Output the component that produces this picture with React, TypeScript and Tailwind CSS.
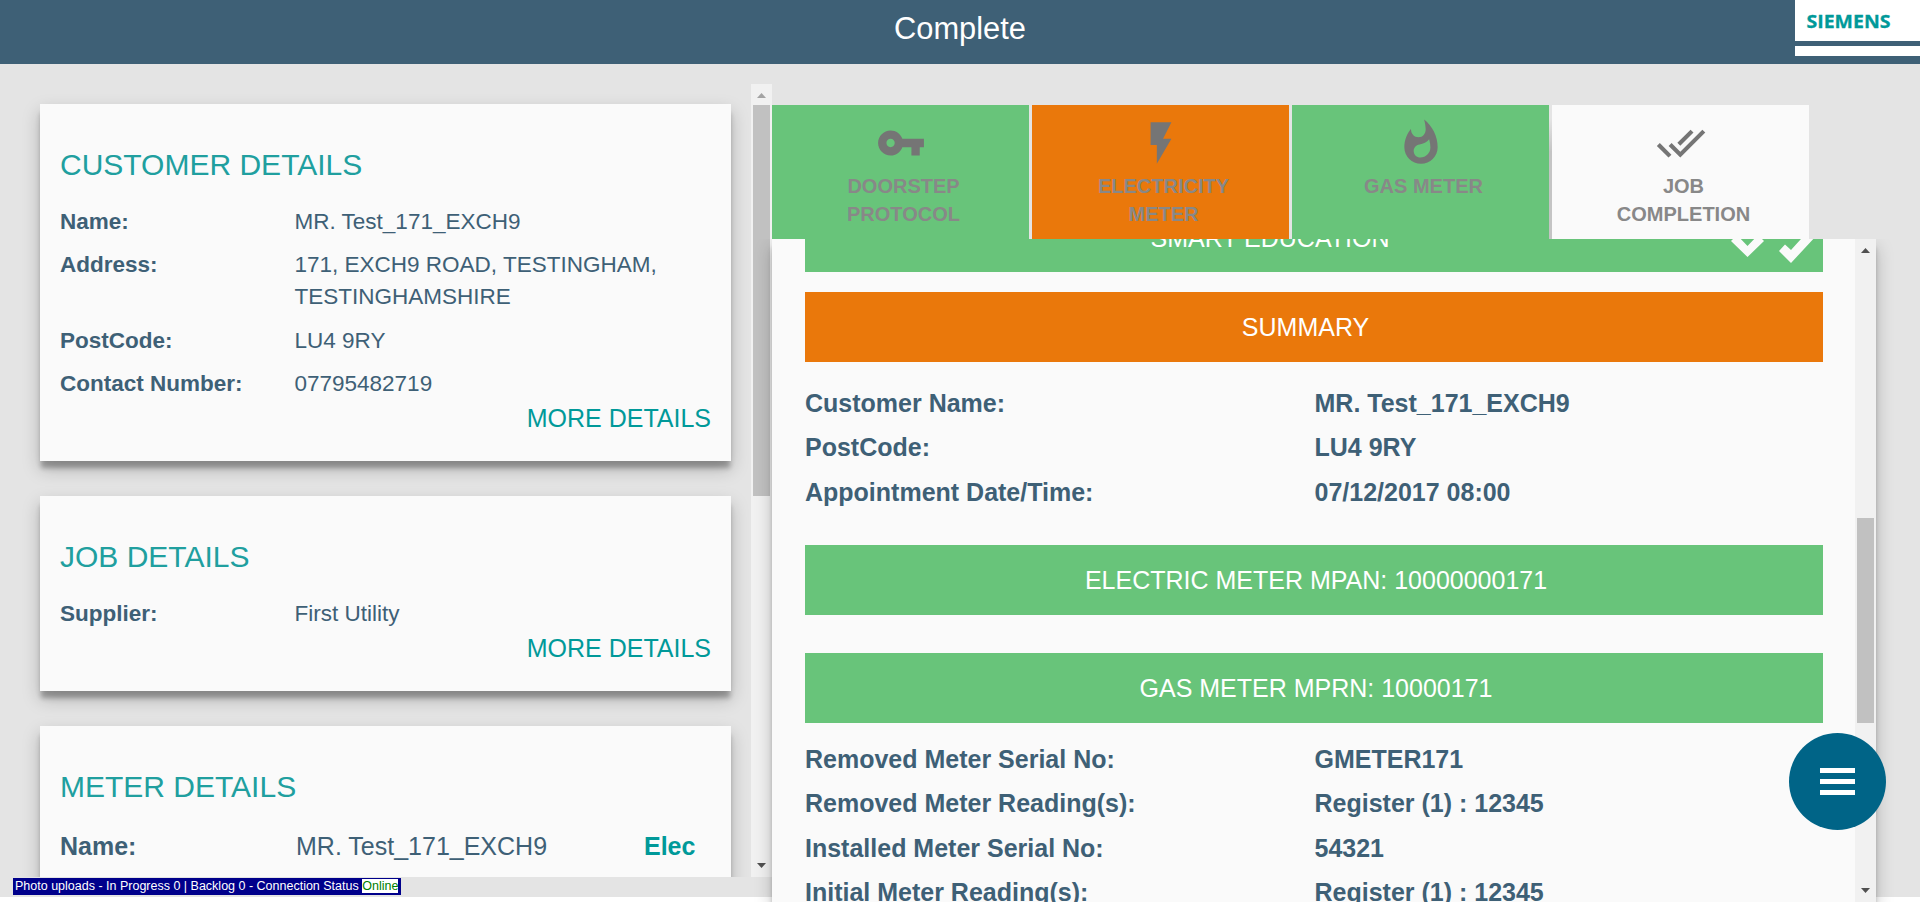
import { ReactNode } from "react";
import clsx from "clsx";

const shadow = "shadow-[0_8px_5px_-1px_rgba(0,0,0,0.28),0_8px_17px_rgba(0,0,0,0.22)]";

function Arrow({ down, className }: { down?: boolean; className: string }) {
  return (
    <svg viewBox="0 0 9 5" className={clsx("h-[5px] w-[9px]", down && "rotate-180", className)} fill="currentColor">
      <path d="M0 5h9L4.5 0z" />
    </svg>
  );
}

function Scrollbar({ thumb, top, up = "text-[#505050]" }: { thumb: string; top: string; up?: string }) {
  return (
    <div className="flex h-full w-[21px] shrink-0 flex-col items-center bg-[#f1f1f1]">
      <Arrow className={clsx("mt-[9px] shrink-0", up)} />
      <div className={clsx("w-[17px] bg-[#c1c1c1]", thumb, top)} />
      <Arrow down className="mt-auto mb-[9px] shrink-0 text-[#505050]" />
    </div>
  );
}

function Card({ title, className, children }: { title: string; className: string; children: ReactNode }) {
  return (
    <section className={clsx("flex shrink-0 flex-col bg-[#fafafa] px-5 pt-[39px]", shadow, className)}>
      <h2 className="h-[44px] text-[30px] leading-[43px] text-[#209f9f]">{title}</h2>
      {children}
    </section>
  );
}

function Row({ label, value }: { label: string; value: string }) {
  return (
    <div className="mb-[11.4px] flex">
      <div className="w-[234.5px] shrink-0 font-bold">{label}</div>
      <div>{value}</div>
    </div>
  );
}

function Tab({ label, className, path }: { label: string; className: string; path: string }) {
  return (
    <div className={clsx("flex h-[134px] w-[257px] flex-col items-center pt-[13px]", className)}>
      <svg viewBox="0 0 24 24" className="size-[50px] shrink-0" fill="#757575">
        <path d={path} />
      </svg>
      <div className="mt-[4px] w-[150px] translate-x-[3px] text-center text-[20px] leading-[28px] font-bold text-[#888]">{label}</div>
    </div>
  );
}

function Bar({ className, children }: { className: string; children: ReactNode }) {
  return (
    <div className={clsx("flex h-[70px] shrink-0 items-center justify-center text-[25px] leading-[36px] text-white", className)}>
      {children}
    </div>
  );
}

function Summary({ rows, className }: { rows: string[][]; className: string }) {
  return (
    <div className={clsx("shrink-0 text-[25px] leading-[44.6px] font-bold", className)}>
      {rows.map(([label, value]) => (
        <div key={label} className="grid grid-cols-2">
          <div>{label}</div>
          <div className="pl-[0.5px]">{value}</div>
        </div>
      ))}
    </div>
  );
}

export default function App() {
  return (
    <div className="relative flex h-[902px] w-[1920px] flex-col overflow-hidden bg-white font-['Liberation_Sans',Arial,sans-serif] text-[#3e6076]">
      <header className="relative flex h-16 shrink-0 justify-center bg-[#3e6076]">
        <h1 className="mt-[7px] text-[30.8px] leading-[43px] text-white">Complete</h1>
        <div className="absolute top-0 right-0 flex h-14 w-[125px] flex-col bg-white">
          <svg viewBox="0 0 125 41" className="h-[41px] w-[125px]">
            <text x="11.5" y="28.3" textLength="84" lengthAdjust="spacingAndGlyphs" fontFamily="Open Sans, sans-serif" fontWeight="700" fontSize="18" fill="#009999" stroke="#009999" strokeWidth="0.3">SIEMENS</text>
          </svg>
          <div className="h-[5px] bg-[#3e6076]" />
        </div>
      </header>

      <div className="flex h-[833px] shrink-0 bg-[#e4e4e4]">
        <aside className="flex w-[772px] shrink-0 flex-col pt-5">
          <div className="flex h-[793px] shrink-0">
            <div className="flex w-[751px] flex-col gap-[35px] overflow-hidden py-5 pr-5 pl-10">
              <Card title="CUSTOMER DETAILS" className="h-[357px]">
                <div className="mt-[19px] text-[22.5px] leading-[32px]">
                  <Row label="Name:" value="MR. Test_171_EXCH9" />
                  <Row label="Address:" value="171, EXCH9 ROAD, TESTINGHAM, TESTINGHAMSHIRE" />
                  <Row label="PostCode:" value="LU4 9RY" />
                  <Row label="Contact Number:" value="07795482719" />
                </div>
                <a className="-mt-[12px] self-end text-[25px] leading-[36px] text-[#009999]">MORE DETAILS</a>
              </Card>
              <Card title="JOB DETAILS" className="h-[195px]">
                <div className="mt-[19px] text-[22.5px] leading-[32px]">
                  <Row label="Supplier:" value="First Utility" />
                </div>
                <a className="-mt-[11px] self-end text-[25px] leading-[36px] text-[#009999]">MORE DETAILS</a>
              </Card>
              <Card title="METER DETAILS" className="h-[300px]">
                <div className="mt-[19px] flex text-[25px] leading-[36px]">
                  <div className="w-[236px] font-bold">Name:</div>
                  <div className="w-[348px]">MR. Test_171_EXCH9</div>
                  <div className="font-bold text-[#009999]">Elec</div>
                </div>
              </Card>
            </div>
            <Scrollbar thumb="h-[391px]" top="mt-[7px]" up="text-[#a3a3a3]" />
          </div>
          <div className="mt-px ml-[13px] flex h-[17px] w-[388px] items-center bg-[#00008b] px-[2px] pb-px text-[12.5px] leading-[14px] whitespace-pre text-white">
            Photo uploads - In Progress 0 | Backlog 0 - Connection Status <span className="bg-white text-[#008000]">Online</span>
          </div>
        </aside>

        <main className="flex h-[838px] flex-col pt-[41px]">
          <nav className="relative flex gap-[3px]">
            <Tab label="DOORSTEP PROTOCOL" className="bg-[#68c47a]" path="M12.65 10C11.83 7.67 9.61 6 7 6c-3.31 0-6 2.69-6 6s2.69 6 6 6c2.61 0 4.83-1.67 5.65-4H17v4h4v-4h2v-4H12.65zM7 14c-1.1 0-2-.9-2-2s.9-2 2-2 2 .9 2 2-.9 2-2 2z" />
            <Tab label="ELECTRICITY METER" className="bg-[#ea780b]" path="M7 2v11h3v9l7-12h-4l4-8z" />
            <Tab label="GAS METER" className="bg-[#68c47a]" path="M13.5.67s.74 2.65.74 4.8c0 2.06-1.35 3.73-3.41 3.73-2.07 0-3.63-1.67-3.63-3.73l.03-.36C5.21 7.51 4 10.62 4 14c0 4.42 3.58 8 8 8s8-3.58 8-8C20 8.61 17.41 3.8 13.5.67zM11.71 19c-1.78 0-3.22-1.4-3.22-3.14 0-1.62 1.05-2.76 2.81-3.12 1.77-.36 3.6-1.21 4.62-2.58.39 1.29.59 2.65.59 4.04 0 2.65-2.15 4.8-4.8 4.8z" />
            <div className="-ml-[3px] h-[134px] bg-linear-to-b from-[#e4e4e4] from-10% to-[#c4c4c4] to-35% pl-[3px]">
              <Tab label="JOB COMPLETION" className="bg-[#fafafa]" path="M18 7l-1.41-1.41-6.34 6.34 1.41 1.41L18 7zm4.24-1.41L11.66 16.17 7.48 12l-1.41 1.41L11.66 19l12-12-1.42-1.41zM.41 13.41L6 19l1.41-1.41L1.83 12 .41 13.41z" />
            </div>
          </nav>
          <div className={clsx("relative h-[663px] w-[1104px] shrink-0", "[clip-path:inset(0_-40px_0_-40px)]")}>
            <div className={clsx("flex h-full bg-[#fafafa]", shadow)}>
              <div className="flex h-full w-[1083px] flex-col overflow-hidden pr-[32px] pl-[33px]">
                <Bar className="relative -mt-[37px] bg-[#68c47a] pt-px pr-[88px]">
                  SMART EDUCATION
                  <svg viewBox="0 0 84 32" className="absolute top-[24px] right-[8px] h-[32px] w-[84px]" fill="#fafafa">
                    <path d="M0 15l6-6 10.5 11L27 9l6 6-16.500 16z" />
                  </svg>
                  <svg viewBox="0 0 40 36" className="absolute top-[26px] right-[5.5px] h-[36px] w-[40px]" fill="#fafafa">
                    <path d="M1 23l6-6.500 6 5.500L32 1l7 6L13 35z" />
                  </svg>
                </Bar>
                <Bar className="mt-5 bg-[#ea780b] pr-[17px]">SUMMARY</Bar>
                <Summary
                  className="mt-[18.5px] h-[164.5px]"
                  rows={[
                    ["Customer Name:", "MR. Test_171_EXCH9"],
                    ["PostCode:", "LU4 9RY"],
                    ["Appointment Date/Time:", "07/12/2017 08:00"],
                  ]}
                />
                <Bar className="bg-[#68c47a] pl-[4px]">ELECTRIC METER MPAN: 10000000171</Bar>
                <Bar className="mt-[38px] bg-[#68c47a] pl-[4px]">GAS METER MPRN: 10000171</Bar>
                <Summary
                  className="mt-[13.500px]"
                  rows={[
                    ["Removed Meter Serial No:", "GMETER171"],
                    ["Removed Meter Reading(s):", "Register (1) : 12345"],
                    ["Installed Meter Serial No:", "54321"],
                    ["Initial Meter Reading(s):", "Register (1) : 12345"],
                  ]}
                />
              </div>
              <Scrollbar thumb="h-[205px]" top="mt-[265px]" />
            </div>
          </div>
        </main>
      </div>

      <button className="absolute top-[732.500px] left-[1788.500px] flex size-[97px] flex-col items-center justify-center gap-[6px] rounded-full bg-[#006487]">
        <span className="h-[5px] w-[35px] bg-white" />
        <span className="h-[5px] w-[35px] bg-white" />
        <span className="h-[5px] w-[35px] bg-white" />
      </button>
    </div>
  );
}
